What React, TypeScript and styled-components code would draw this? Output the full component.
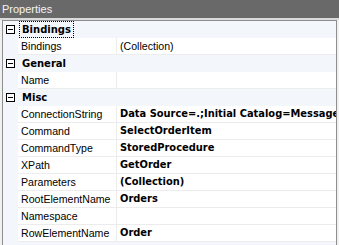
import { createGlobalStyle } from "styled-components";
import styled from "styled-components";

type Item = { label: string; value?: string; bold?: boolean };
type Category = { name: string; focused?: boolean; items: Item[] };

const categories: Category[] = [
  { name: "Bindings", focused: true, items: [{ label: "Bindings", value: "(Collection)" }] },
  { name: "General", items: [{ label: "Name" }] },
  {
    name: "Misc",
    items: [
      { label: "ConnectionString", value: "Data Source=.;Initial Catalog=MessageStore", bold: true },
      { label: "Command", value: "SelectOrderItem", bold: true },
      { label: "CommandType", value: "StoredProcedure", bold: true },
      { label: "XPath", value: "GetOrder", bold: true },
      { label: "Parameters", value: "(Collection)", bold: true },
      { label: "RootElementName", value: "Orders", bold: true },
      { label: "Namespace" },
      { label: "RowElementName", value: "Order", bold: true },
    ],
  },
];

const App = (): JSX.Element => {
  return (
    <>
      <GlobalStyle />
      <Window>
        <TitleBar>Properties</TitleBar>
        <Strip />
        <Grid>
          {categories.map((cat) => (
            <div key={cat.name}>
              <CategoryRow>
                <Toggle />
                <CategoryName $focused={cat.focused}>{cat.name}</CategoryName>
              </CategoryRow>
              {cat.items.map((item) => (
                <ItemRow key={item.label}>
                  <Gutter />
                  <Label>{item.label}</Label>
                  <Value $bold={item.bold}>{item.value}</Value>
                </ItemRow>
              ))}
            </div>
          ))}
        </Grid>
      </Window>
    </>
  );
};
export default App;

const GlobalStyle = createGlobalStyle`
  html, body {
    margin: 0;
    padding: 0;
    background: #f0f0f0;
  }
`;

const Window = styled.div`
  width: 339px;
  height: 245px;
  overflow: hidden;
  display: flex;
  flex-direction: column;
  background: #f0f0f0;
  font-family: "Liberation Sans", Arial, sans-serif;
  font-size: 10.6px;
`;

const TitleBar = styled.div`
  height: 18px;
  line-height: 18px;
  padding-left: 2px;
  background: #696969;
  color: #f4f4f4;
  font-size: 11px;
`;

const Strip = styled.div`
  height: 2px;
  background: #dadada;
`;

const Grid = styled.div`
  flex: 1;
  margin: 0 2px 0 2px;
  border: 1px solid #8e8e8e;
  border-bottom: none;
  background: #f3f6fb;
  overflow: hidden;
`;

const CategoryRow = styled.div`
  height: 17px;
  display: flex;
  align-items: center;
  background: #f3f6fb;
`;

const Toggle = styled.span`
  position: relative;
  width: 9px;
  height: 9px;
  margin-left: 3px;
  box-sizing: border-box;
  border: 1px solid #000;
  background: #fff;
  &::after {
    content: "";
    position: absolute;
    left: 1px;
    top: 3px;
    width: 5px;
    height: 1px;
    background: #000;
  }
`;

const CategoryName = styled.span<{ $focused?: boolean }>`
  margin-left: 4px;
  padding: 0 2px;
  height: 15px;
  line-height: 15px;
  font-family: "DejaVu Sans", Verdana, sans-serif;
  font-weight: bold;
  font-size: 10px;
  color: #000;
  border: 1px dotted ${(p) => (p.$focused ? "#000" : "transparent")};
`;

const ItemRow = styled.div`
  height: 17px;
  display: flex;
`;

const Gutter = styled.div`
  width: 15px;
  flex: none;
  background: #f3f6fb;
`;

const Label = styled.div`
  width: 95px;
  flex: none;
  padding-left: 3px;
  line-height: 16px;
  background: #fff;
  border-right: 1px solid #ececec;
  border-bottom: 1px solid #ececec;
  white-space: nowrap;
  overflow: hidden;
  color: #000;
`;

const Value = styled.div<{ $bold?: boolean }>`
  flex: 1;
  min-width: 0;
  padding-left: 3px;
  line-height: 16px;
  background: #fff;
  border-bottom: 1px solid #ececec;
  white-space: nowrap;
  overflow: hidden;
  color: #000;
  ${(p) =>
    p.$bold &&
    `
    font-family: "DejaVu Sans", Verdana, sans-serif;
    font-weight: bold;
    font-size: 9.9px;
  `}
`;
